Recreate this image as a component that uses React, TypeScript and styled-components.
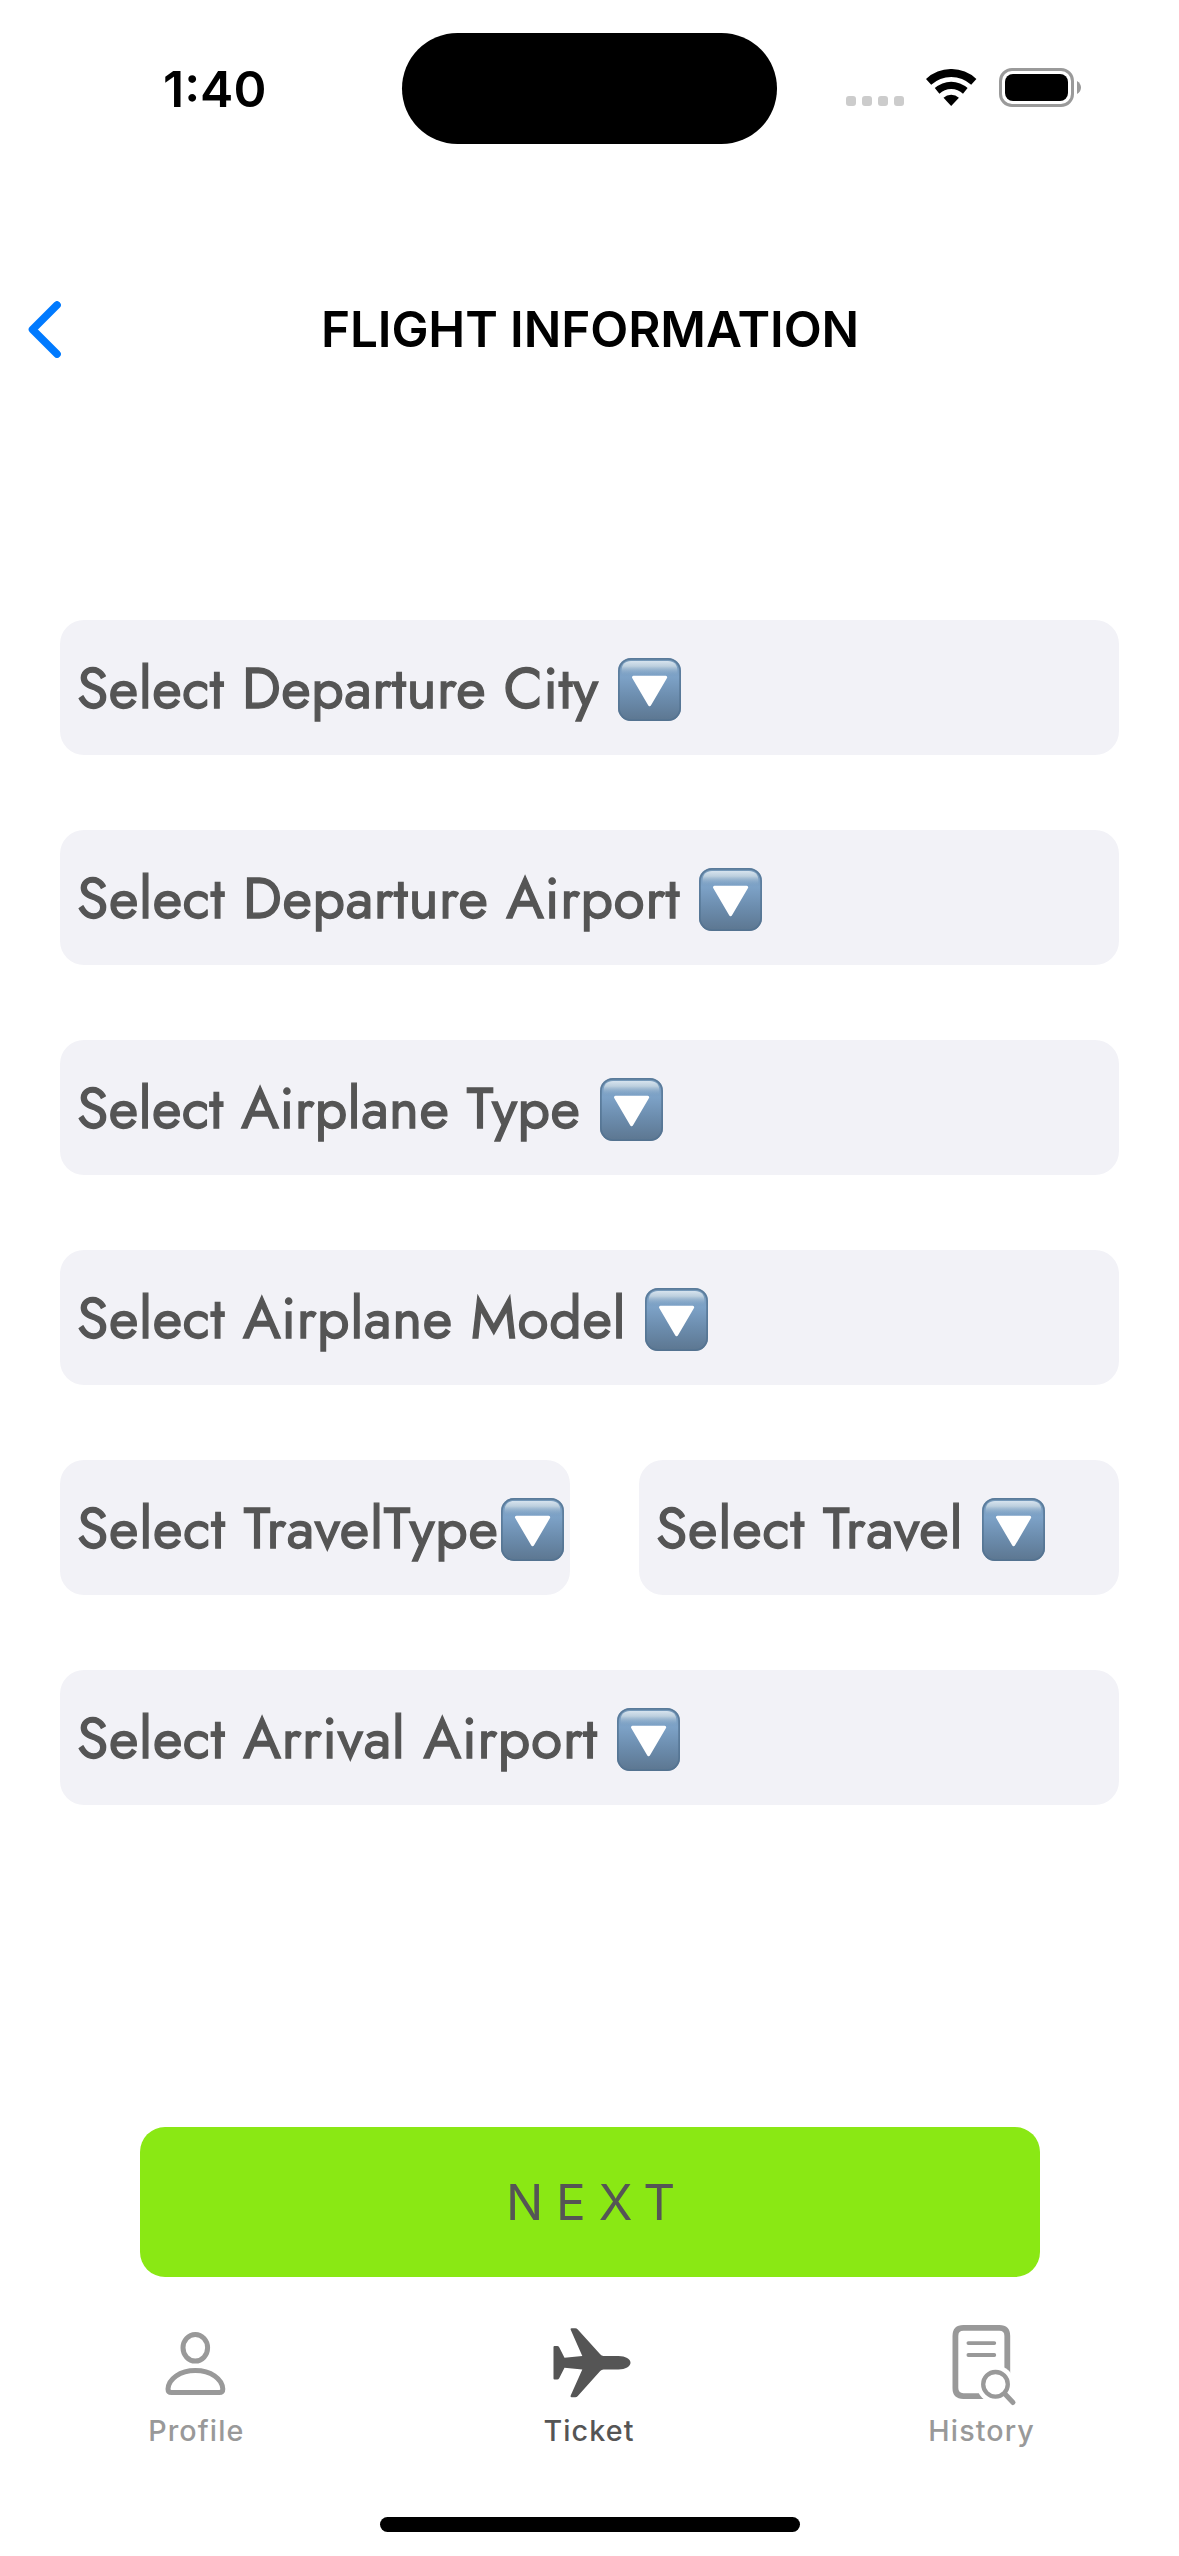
import React from "react";
import styled, { createGlobalStyle } from "styled-components";

const SYSTEM_FONT = `Inter, "Liberation Sans", sans-serif`;
const FIELD_FONT = `Jost, Lato, "Liberation Sans", sans-serif`;

const GlobalStyle = createGlobalStyle`
  * { box-sizing: border-box; }
  body { margin: 0; background: #fff; }
  button { border: 0; padding: 0; margin: 0; background: none; font: inherit; color: inherit; }
  svg { display: block; flex: none; }
`;

const Screen = styled.div`
  display: flex;
  flex-direction: column;
  width: 1179px;
  height: 2556px;
  background: #fff;
  font-family: ${SYSTEM_FONT};
  overflow: hidden;
`;

const StatusBar = styled.div`
  display: grid;
  grid-template-columns: 402px 375px 1fr;
  align-items: center;
  height: 144px;
  padding-top: 33px;
`;

const Time = styled.span`
  padding-left: 163px;
  font-size: 50px;
  font-weight: 600;
  line-height: 60px;
  color: #000;
`;

const Island = styled.div`
  height: 111px;
  border-radius: 56px;
  background: #000;
`;

const StatusIcons = styled.div`
  display: flex;
  align-items: center;
  gap: 22px;
  padding: 0 0 2px 69px;
`;

const SignalDots = styled.div`
  display: flex;
  align-self: flex-end;
  gap: 6px;
  padding-bottom: 1px;
`;

const Dot = styled.i`
  width: 10px;
  height: 10px;
  border-radius: 3px;
  background: #ccc;
`;

const Header = styled.header`
  display: grid;
  grid-template-columns: 120px 1fr 120px;
  align-items: center;
  height: 132px;
  margin-top: 119px;
`;

const BackButton = styled.button`
  padding-left: 28px;
`;

const Title = styled.h1`
  margin: 0;
  padding-left: 1px;
  text-align: center;
  font-size: 49.5px;
  font-weight: 600;
  line-height: 60px;
  letter-spacing: -0.1px;
  color: #000;
`;

const Form = styled.main`
  display: flex;
  flex-direction: column;
  gap: 75px;
  margin-top: 225px;
  padding: 0 60px;
`;

const FieldRow = styled.div`
  display: grid;
  grid-template-columns: 510px 480px;
  justify-content: space-between;
`;

const Field = styled.button`
  display: flex;
  align-items: center;
  height: 135px;
  padding-left: 16px;
  border-radius: 24px;
  background: #f2f2f7;
`;

const FieldLabel = styled.span<{ $width: number; $tracking: number }>`
  flex: none;
  width: ${(p) => p.$width}px;
  padding-left: 1px;
  font-family: ${FIELD_FONT};
  font-size: 57px;
  font-weight: 400;
  line-height: 80px;
  letter-spacing: ${(p) => p.$tracking}px;
  text-align: left;
  white-space: nowrap;
  color: #555;
  -webkit-text-stroke: 1.3px #555;
`;

const ArrowSlot = styled.span`
  padding-top: 4px;
`;

const NextButton = styled.button`
  width: 900px;
  height: 150px;
  margin: 322px auto 0 140px;
  padding-left: 14px;
  border-radius: 25px;
  background: #8ae814;
  font-size: 49.5px;
  line-height: 60px;
  letter-spacing: 12.8px;
  color: #555;
`;

const TabBar = styled.nav`
  display: grid;
  grid-template-columns: repeat(3, 1fr);
  width: 1178px;
  padding-top: 40px;
`;

const Tab = styled.button<{ $active?: boolean }>`
  display: flex;
  flex-direction: column;
  align-items: center;
  gap: 6px;
  color: ${(p) => (p.$active ? "#555" : "#999")};
  font-size: 28.7px;
  font-weight: 500;
  line-height: 36px;
  letter-spacing: 1.1px;
`;

const HomeIndicator = styled.div`
  width: 420px;
  height: 15px;
  margin: 68px auto 0;
  border-radius: 8px;
  background: #000;
`;

const WifiIcon = () => (
  <svg width="50.5" height="37" viewBox="0 0 50.5 37">
    <path d="M0 9.9A37 37 0 0 1 50.4 9.9L45.2 15.8A29.3 29.3 0 0 0 5.2 15.8Z" />
    <path d="M8.8 19.1A24.3 24.3 0 0 1 41.6 19.1L37 24.8A17 17 0 0 0 13.4 24.8Z" />
    <path d="M17.5 28.7A11.3 11.3 0 0 1 32.9 28.7L25.2 37Z" />
  </svg>
);

const BatteryIcon = () => (
  <svg width="82" height="39" viewBox="0 0 82 39">
    <rect x="1.5" y="1.5" width="72" height="36" rx="11.5" fill="none" stroke="#9a9a9a" strokeWidth="3" />
    <rect x="6" y="6" width="63" height="27" rx="8" />
    <path d="M78 13C80.7 14.5 82 17 82 19.5S80.7 24.5 78 26Z" fill="#9a9a9a" />
  </svg>
);

const ChevronIcon = () => (
  <svg width="33" height="57" viewBox="0 0 33 57">
    <path d="M29 4L4.5 28.5L29 53" fill="none" stroke="#007aff" strokeWidth="7.6" strokeLinecap="round" strokeLinejoin="round" />
  </svg>
);

const ArrowSquare = () => (
  <svg width="63" height="63" viewBox="0 0 63 63">
    <defs>
      <linearGradient id="squareFill" x1="0" y1="0" x2="0" y2="1">
        <stop offset="0" stopColor="#7598b8" />
        <stop offset="0.3" stopColor="#7da2c7" />
        <stop offset="0.62" stopColor="#6c8dae" />
        <stop offset="1" stopColor="#5c7690" />
      </linearGradient>
      <linearGradient id="squareGloss" x1="0" y1="0" x2="0" y2="1">
        <stop offset="0" stopColor="#d6e3ee" />
        <stop offset="0.35" stopColor="#bccfde" />
        <stop offset="1" stopColor="#7da2c7" stopOpacity="0" />
      </linearGradient>
    </defs>
    <rect width="63" height="63" rx="13" fill="url(#squareFill)" />
    <rect x="0.9" y="0.9" width="61.2" height="61.2" rx="12.2" fill="none" stroke="#527190" strokeWidth="1.8" strokeOpacity="0.75" />
    <path d="M3.5 18V13C3.5 6.5 7 3 13 3H50C56 3 59.5 6.5 59.5 13V18Z" fill="url(#squareGloss)" />
    <path d="M15.5 19.3H47.7L31.6 46.8Z" fill="#fff" stroke="#fff" strokeWidth="3" strokeLinejoin="round" />
  </svg>
);

const ProfileIcon = () => (
  <svg width="90" height="90" viewBox="0 0 90 90" fill="none" stroke="currentColor" strokeWidth="5">
    <ellipse cx="44.3" cy="30.8" rx="12.3" ry="13.3" />
    <path d="M20.5 75.5Q17 75.5 17 72C17.5 62 29 53.5 44.4 53.5S71.3 62 71.8 72Q71.8 75.5 68.3 75.5Z" />
  </svg>
);

const PlaneIcon = () => (
  <svg width="90" height="90" viewBox="0 0 90 90" fill="currentColor">
    <path d="M27.5 11.2H31.2Q32.8 11.2 33.8 12.5L56.2 37.3Q57.5 39 59.5 39H74.5C81.5 39 86.5 42 86.5 45.7S81.5 52.4 74.5 52.4H59.5Q57.5 52.4 56.2 54.1L33.8 78.9Q32.8 80.2 31.2 80.2H27.5Q26 80.2 26.7 78.6L38.3 52.5L20.5 50.7L15.2 61.3Q14.5 62.5 13.2 62.5H10.5Q9.5 62.5 9.5 61.5V30Q9.5 29 10.5 29H13.2Q14.5 29 15.2 30.2L20.5 40.7L38.3 38.9L26.7 12.8Q26 11.2 27.5 11.2Z" />
  </svg>
);

const HistoryIcon = () => (
  <svg width="90" height="90" viewBox="0 0 90 90" fill="none" stroke="currentColor" strokeLinecap="round">
    <path d="M58 79.1H26.4Q18.4 79.1 18.4 71.1V18.9Q18.4 10.9 26.4 10.9H62.3Q70.3 10.9 70.3 18.9V62" strokeWidth="5.8" />
    <path d="M31.4 26.1H57.3M31.4 38H57.3" strokeWidth="3.8" />
    <circle cx="58.5" cy="67.3" r="19" fill="#fff" stroke="none" />
    <circle cx="58.5" cy="67.3" r="12.3" strokeWidth="4.3" />
    <path d="M68 77L76 85.5" strokeWidth="5" />
  </svg>
);

type SelectProps = { text: string; width: number; tracking: number };

const SelectField = ({ text, width, tracking }: SelectProps) => (
  <Field>
    <FieldLabel $width={width} $tracking={tracking}>{text}</FieldLabel>
    <ArrowSlot><ArrowSquare /></ArrowSlot>
  </Field>
);

export default function App() {
  return (
    <Screen>
      <GlobalStyle />
      <StatusBar>
        <Time>1:40</Time>
        <Island />
        <StatusIcons>
          <SignalDots><Dot /><Dot /><Dot /><Dot /></SignalDots>
          <WifiIcon />
          <BatteryIcon />
        </StatusIcons>
      </StatusBar>
      <Header>
        <BackButton aria-label="Back"><ChevronIcon /></BackButton>
        <Title>FLIGHT INFORMATION</Title>
      </Header>
      <Form>
        <SelectField text="Select Departure City" width={542} tracking={0.55} />
        <SelectField text="Select Departure Airport" width={623} tracking={0.7} />
        <SelectField text="Select Airplane Type" width={524} tracking={0.46} />
        <SelectField text="Select Airplane Model" width={569} tracking={0.7} />
        <FieldRow>
          <SelectField text="Select TravelType" width={425} tracking={0.8} />
          <SelectField text="Select Travel" width={327} tracking={0.85} />
        </FieldRow>
        <SelectField text="Select Arrival Airport" width={541} tracking={0.75} />
      </Form>
      <NextButton>NEXT</NextButton>
      <TabBar>
        <Tab><ProfileIcon />Profile</Tab>
        <Tab $active><PlaneIcon />Ticket</Tab>
        <Tab><HistoryIcon />History</Tab>
      </TabBar>
      <HomeIndicator />
    </Screen>
  );
}
